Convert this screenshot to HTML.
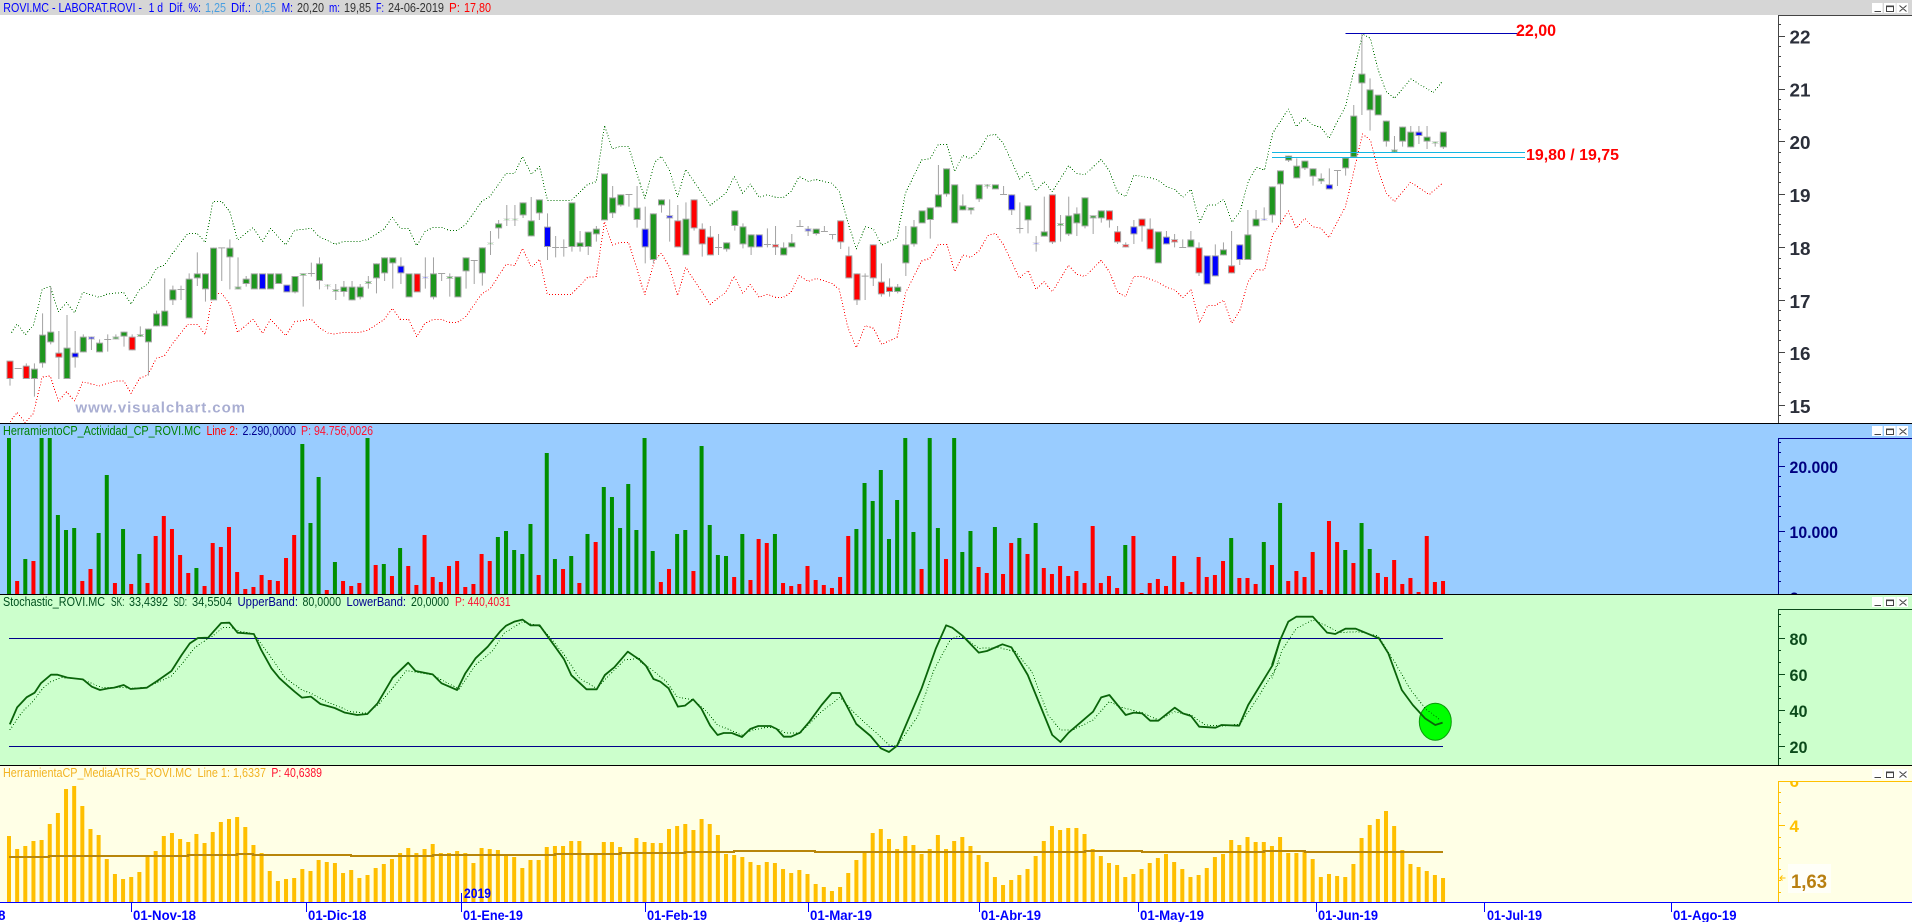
<!DOCTYPE html>
<html lang="es">
<head>
<meta charset="utf-8">
<title>ROVI.MC - LABORAT.ROVI</title>
<style>
html,body{margin:0;padding:0;background:#fff;width:1912px;height:922px;overflow:hidden}
svg{display:block}
text{font-family:"Liberation Sans",Arial,sans-serif;white-space:pre}
.t{font-size:12.6px}
.ax{font-size:17px;font-weight:bold}
.axm{font-size:18.5px;font-weight:bold}
.d{font-size:13.5px;font-weight:bold;fill:#0000ff}
.ns{vector-effect:non-scaling-stroke;fill:none}
.dot{stroke-dasharray:1 2;stroke-width:1;stroke-linejoin:round;shape-rendering:crispEdges}
</style>
</head>
<body>
<svg xmlns="http://www.w3.org/2000/svg" width="1912" height="922" viewBox="0 0 1912 922">
<defs>
<g id="btn">
<rect x="1872" y="3" width="10.6" height="10" fill="#fff"/>
<rect x="1884" y="3" width="11.7" height="10" fill="#fff"/>
<rect x="1896.5" y="3" width="11.5" height="10" fill="#fff"/>
<path d="M1874.5 11.5H1881M1886.5 6H1893.5V11.5H1886.5ZM1886.5 6.6H1893.5M1899.5 5.5L1906.5 11.5M1906.5 5.5L1899.5 11.5" stroke="#444" stroke-width="1" fill="none"/>
</g>
<g id="bd">
<path id="cg" d="M3 1109V1134M4 1007V1087M5 998V1024M7 1046V1134M9 1013V1054M11 1031V1054M13 1013V1015M14 998V1007M16 1006V1008M17 989V1024M18 943V976M19 935V976M20 871V898M22 839V952M23 823V832M24 823V865M25 746V898M27 746V769M28 863V865M29 839V849M30 823V865M32 823V865M33 823V849M35 831V874M36 823V825M38 793V840M39 856V857M40 871V873M41 863V873M42 863V898M43 863V889M44 847V849M45 793V832M46 775V817M47 775V787M49 823V889M52 823V889M54 831V833M55 832V889M56 775V811M58 745V817M59 730V731M60 673V682M61 658V659M62 658V659M63 610V643M64 664V706M65 601V637M69 610V738M70 730V738M71 698V738M72 689V700M73 523V658M74 595V637M75 586V613M77 626V657M79 643V777M80 601V613M83 659V763M88 730V745M89 634V675M90 682V730M91 706V739M95 745V763M96 730V739M99 689V699M109 863V873M110 736V787M111 682V730M112 634V667M113 625V657M114 586V619M115 508V580M116 556V667M117 619V628M118 625V628M119 556V595M120 555V556M121 556V565M125 619V658M127 697V707M129 673V675M130 649V700M131 643V667M132 595V676M133 649V652M134 634V652M141 697V787M145 721V739M149 751V763M152 706V777M153 659V676M155 562V643M156 514V550M157 470V479M158 500V532M159 485V502M160 508V527M161 538V541M164 476V502M165 350V469M166 224V247M167 271V328M168 287V343M169 365V422M170 452V454M171 383V422M172 398V439M174 413V422M175 428V429M176 398V439"/>
<path id="cr" d="M0 1085V1134M2 1100V1134M6 1061V1070M15 1013V1048M50 823V874M82 664V739M84 601V682M85 689V730M86 713V763M94 736V739M102 664V724M103 769V832M104 823V898M106 736V832M107 848V880M108 863V873M128 586V724M135 634V658M136 697V724M137 736V739M139 659V676M140 689V745M143 721V724M146 745V817M150 799V817"/>
<path id="cb" d="M8 1061V1070M10 1013V1015M31 823V865M34 857V874M48 800V817M51 832V833M66 683V738M78 689V739M81 649V652M92 706V739M98 689V691M123 586V628M126 730V731M138 682V700M142 713V730M147 769V850M148 769V826M151 736V777M154 658V659M162 556V565M173 398V405"/>
</g>
</defs>

<!-- MAIN PANEL -->
<rect x="0" y="0" width="1912" height="15" fill="#d6d6d6"/>
<rect x="0" y="15" width="1912" height="408" fill="#fff"/>

<g class="t">
<text x="3.3" y="12" fill="#0000ff" textLength="138.7" lengthAdjust="spacingAndGlyphs">ROVI.MC - LABORAT.ROVI -</text>
<text x="148.6" y="12" fill="#0000ff" textLength="14.4" lengthAdjust="spacingAndGlyphs">1 d</text>
<text x="169" y="12" fill="#0000ff" textLength="32" lengthAdjust="spacingAndGlyphs">Dif. %:</text>
<text x="205" y="12" fill="#4a9fe0" textLength="21" lengthAdjust="spacingAndGlyphs">1,25</text>
<text x="231" y="12" fill="#0000ff" textLength="20" lengthAdjust="spacingAndGlyphs">Dif.:</text>
<text x="255.5" y="12" fill="#4a9fe0" textLength="20.5" lengthAdjust="spacingAndGlyphs">0,25</text>
<text x="281.6" y="12" fill="#0000ff" textLength="11.4" lengthAdjust="spacingAndGlyphs">M:</text>
<text x="297" y="12" fill="#333" textLength="27" lengthAdjust="spacingAndGlyphs">20,20</text>
<text x="329" y="12" fill="#0000ff" textLength="11" lengthAdjust="spacingAndGlyphs">m:</text>
<text x="344" y="12" fill="#333" textLength="27" lengthAdjust="spacingAndGlyphs">19,85</text>
<text x="376" y="12" fill="#0000ff" textLength="8" lengthAdjust="spacingAndGlyphs">F:</text>
<text x="388" y="12" fill="#333" textLength="56" lengthAdjust="spacingAndGlyphs">24-06-2019</text>
<text x="449" y="12" fill="#ff0000" textLength="11" lengthAdjust="spacingAndGlyphs">P:</text>
<text x="464" y="12" fill="#ff0000" textLength="27" lengthAdjust="spacingAndGlyphs">17,80</text>
</g>
<use href="#btn"/>

<!-- Envelopes -->
<g transform="scale(.40816 .33333)" class="dotg">
<polyline class="ns dot" stroke="#007000" points="28,998 42,972 62,1004 82,975 92,930 103,868 123,859 143,935 163,908 183,938 203,877 243,892 263,882 303,877 321,913 342,868 362,853 383,805 403,795 423,760 460,700 483,700 503,727 522,604 543,604 563,635 582,720 620,683 643,725 663,685 700,735 722,691 763,685 782,710 822,733 842,724 882,724 902,718 940,688 961,652 981,685 1001,685 1021,737 1041,695 1062,682 1081,682 1101,691 1121,691 1141,673 1181,603 1200,590 1240,520 1261,520 1280,470 1302,523 1322,499 1341,601 1400,601 1440,553 1461,545 1481,376 1500,447 1520,439 1540,439 1568,550"/>
<polyline class="ns dot" stroke="#ff0000" points="25,1265 42,1237 62,1268 82,1240 103,1132 123,1128 143,1203 163,1176 183,1203 203,1145 243,1158 283,1143 303,1143 321,1180 342,1135 362,1125 383,1075 403,1067 423,1030 460,973 483,973 503,1003 522,880 543,880 563,912 582,997 620,958 643,1000 663,958 700,1007 722,965 763,958 782,983 805,1000 822,1002 842,997 882,997 902,990 940,960 961,925 981,958 1001,958 1021,1010 1041,970 1062,958 1081,958 1101,967 1121,967 1141,950 1181,880 1200,868 1240,793 1261,797 1280,745 1302,802 1322,778 1341,883 1400,883 1440,832 1461,830 1481,665 1500,735 1520,727 1540,727 1568,835"/>
</g>
<g transform="translate(640 0) scale(.40816 .33333)">
<polyline class="ns dot" stroke="#007000" points="0,550 12,595 36,487 52,469 72,510 92,590 112,508 172,616 210,580 231,530 252,580 270,552 292,592 312,584 332,592 352,592 370,575 390,530 412,544 432,539 470,550 488,573 510,670 530,747 552,680 572,687 592,735 630,714 650,580 690,480 710,477 731,433 752,433 771,515 791,466 810,476 830,454 852,407 871,403 891,432 930,537 951,515 970,573 990,545 1010,575 1050,497 1070,520 1090,524 1130,478 1150,513 1170,577 1190,590 1210,525 1250,533 1270,541 1290,560 1310,568 1330,592 1350,568 1371,667 1391,615 1410,615 1430,598 1450,667 1470,635 1490,545 1510,502 1530,510 1550,400 1568,366"/>
<polyline class="ns dot" stroke="#ff0000" points="0,840 12,884 36,780 52,760 72,800 92,887 112,802 172,913 210,877 231,828 252,880 270,853 292,892 312,883 332,892 352,892 370,877 390,826 412,844 432,835 470,850 488,868 510,985 530,1043 552,977 572,985 592,1033 630,1012 650,880 690,783 710,775 731,733 752,733 771,815 791,765 810,772 830,754 852,707 871,700 891,735 930,835 951,811 970,868 990,845 1010,875 1050,796 1070,823 1090,829 1130,781 1150,815 1170,877 1190,890 1210,829 1230,829 1270,847 1290,862 1310,870 1330,893 1350,868 1371,968 1391,916 1410,916 1430,900 1450,970 1470,930 1490,845 1510,808 1530,811 1550,705 1568,672"/>
</g>
<g transform="translate(1272 0) scale(.40816 .33333)">
<polyline class="ns dot" stroke="#007000" points="20,366 40,327 60,380 80,352 100,375 120,382 140,415 160,365 180,320 222,102 241,115 260,210 280,275 300,295 340,237 395,278 418,243"/>
<polyline class="ns dot" stroke="#ff0000" points="20,672 40,633 60,685 80,655 100,680 120,685 140,713 160,665 180,620 222,402 241,420 260,510 280,580 300,605 340,546 385,584 418,549"/>
</g>

<!-- Candles -->
<g transform="translate(10 0) scale(8.144 .33333)" shape-rendering="crispEdges" fill="none">
<path stroke="#a3a3a3" stroke-width=".123" d="M0 1082V1157M2 1090V1100M3 1090V1190M4 940V1103M5 860V1033M6 993V1137M7 945V1137M8 993V1103M9 1003V1057M10 1010V1050M11 1018V1057M12 1003V1055M13 1003V1018M14 995V1040M15 1003V1051M16 979V1010M17 986V1127M18 932V979M19 835V979M20 857V915M21 857V900M22 820V955M23 757V858M24 820V905M25 743V901M26 743V843M27 718V868M28 772V868M29 828V860M35 828V880M36 820V920M37 788V830M38 772V868M39 853V868M40 852V900M41 843V890M42 843V901M43 852V898M44 828V866M45 790V880M46 772V843M47 772V866M48 772V852M51 772V866M52 772V898M53 820V843M54 820V890M56 772V866M57 781V852M58 742V857M59 693V765M60 660V716M61 615V678M62 615V678M63 607V654M64 591V709M65 598V660M66 640V780M67 708V772M68 718V770M69 607V755M70 693V755M71 695V765M72 678V725M74 558V654M75 583V620M76 583V620M77 558V683M78 620V790M79 640V790M80 598V638M81 598V725M82 615V742M83 607V766M84 598V692M85 670V770M86 678V766M87 702V765M88 727V755M89 631V692M90 670V745M91 703V765M93 685V742M94 678V765M95 727V766M96 702V742M97 660V679M98 678V708M99 686V706M100 678V694M101 703V718M102 661V747M103 740V835M104 820V915M105 820V900M106 733V858M107 790V890M108 835V890M109 852V880M110 678V828M111 660V740M113 622V716M114 495V622M115 505V590M117 583V631M118 622V643M119 553V606M120 553V566M122 558V583M123 583V645M124 607V700M125 616V700M126 708V755M127 590V710M128 583V732M129 645V725M130 590V708M131 622V708M132 592V685M133 646V702M134 631V668M135 631V683M136 678V732M137 727V742M138 660V732M139 656V725M140 655V748M142 693V733M143 702V742M144 718V742M145 693V742M146 727V828M148 733V829M149 727V766M150 693V820M151 733V795M152 630V780M153 630V679M154 622V661M155 559V668M156 511V668M157 467V486M158 475V535M159 482V510M160 505V557M161 520V552M162 505V568M163 511V558M164 473V527M165 315V472M166 102V345M167 235V392M169 362V440M170 408V457M171 380V440M172 378V442M173 378V432M174 378V447M175 425V440M176 395V447"/>
<path stroke="#a3a3a3" stroke-width=".86" d="M1 1104V1107M12 1017V1020M21 867V870M26 742V745M37 819V822M53 819V822M57 780V783M67 741V744M68 741V744M76 582V585M87 741V744M93 732V735M97 678V681M100 693V696M101 702V705M105 827V830M122 582V585M124 684V687M144 741V744M163 510V513"/>
<use href="#bd" stroke="#a3a3a3" stroke-width=".86" transform="translate(0 -3)"/>
<use href="#bd" stroke="#a3a3a3" stroke-width=".86" transform="translate(0 3)"/>
<use href="#cg" stroke="#1e961e" stroke-width=".614"/>
<use href="#cr" stroke="#ff0000" stroke-width=".614"/>
<use href="#cb" stroke="#0000ff" stroke-width=".614"/>
</g>

<!-- Levels -->
<path d="M1345.5 33.5H1517" stroke="#0000b4" stroke-width="1" shape-rendering="crispEdges"/>
<path d="M1272 152.5H1525M1272 157.5H1525" stroke="#12b6e2" stroke-width="1" shape-rendering="crispEdges"/>
<text x="1516" y="36" font-size="16.5" font-weight="bold" fill="#ff0000" textLength="40" lengthAdjust="spacingAndGlyphs">22,00</text>
<text x="1526" y="160" font-size="16" font-weight="bold" fill="#ff0000" textLength="93" lengthAdjust="spacingAndGlyphs">19,80 / 19,75</text>
<text x="75.5" y="412.5" font-size="15" font-weight="bold" fill="#a9aed2" textLength="169.5" lengthAdjust="spacing">www.visualchart.com</text>

<!-- Main axis -->
<path d="M1778.5 15V423M1778 15.5H1912" stroke="#444" stroke-width="1" fill="none" shape-rendering="crispEdges"/>
<path stroke="#444" stroke-width="1" shape-rendering="crispEdges" d="M1778 36.5h7M1778 89.5h7M1778 141.5h7M1778 194.5h7M1778 247.5h7M1778 300.5h7M1778 352.5h7M1778 405.5h7M1778 24.5h3M1778 46.5h3M1778 56.5h3M1778 66.5h3M1778 76.5h3M1778 99.5h3M1778 109.5h3M1778 119.5h3M1778 129.5h3M1778 152.5h3M1778 162.5h3M1778 172.5h3M1778 182.5h3M1778 204.5h3M1778 214.5h3M1778 224.5h3M1778 234.5h3M1778 258.5h3M1778 268.5h3M1778 278.5h3M1778 288.5h3M1778 310.5h3M1778 320.5h3M1778 330.5h3M1778 340.5h3M1778 362.5h3M1778 372.5h3M1778 382.5h3M1778 392.5h3M1778 415.5h3"/>
<g class="axm" fill="#2b2f3a">
<text x="1789.5" y="43.5" textLength="21" lengthAdjust="spacingAndGlyphs">22</text>
<text x="1789.5" y="96.5" textLength="21" lengthAdjust="spacingAndGlyphs">21</text>
<text x="1789.5" y="149" textLength="21" lengthAdjust="spacingAndGlyphs">20</text>
<text x="1789.5" y="202" textLength="21" lengthAdjust="spacingAndGlyphs">19</text>
<text x="1789.5" y="255" textLength="21" lengthAdjust="spacingAndGlyphs">18</text>
<text x="1789.5" y="308" textLength="21" lengthAdjust="spacingAndGlyphs">17</text>
<text x="1789.5" y="360" textLength="21" lengthAdjust="spacingAndGlyphs">16</text>
<text x="1789.5" y="413" textLength="21" lengthAdjust="spacingAndGlyphs">15</text>
</g>

<!-- ACTIVIDAD PANEL -->
<rect x="0" y="423" width="1912" height="171" fill="#99ccff"/>
<g transform="translate(9 420) scale(8.148 .33333)" shape-rendering="crispEdges" fill="none" stroke-width=".491">
<path stroke="#008f00" d="M0 54V522M2 417V522M4 54V522M5 54V522M6 285V522M7 330V522M8 324V522M11 339V522M12 165V522M14 327V522M16 402V522M23 444V522M36 72V522M37 309V522M38 171V522M40 426V522M44 54V522M46 432V522M48 384V522M60 351V522M61 333V522M62 390V522M63 402V522M64 312V522M66 99V522M67 417V522M69 408V522M71 342V522M73 201V522M74 231V522M75 324V522M76 192V522M77 330V522M78 54V522M79 393V522M82 342V522M83 330V522M85 78V522M86 315V522M87 405V522M88 408V522M90 342V522M94 342V522M104 327V522M105 189V522M106 243V522M107 150V522M108 357V522M109 240V522M110 54V522M111 336V522M113 54V522M114 324V522M116 54V522M117 396V522M118 333V522M121 321V522M124 354V522M126 309V522M137 375V522M150 354V522M154 366V522M156 249V522M164 390V522M166 309V522M167 387V522"/>
<path stroke="#ff0000" d="M1 483V522M3 423V522M9 483V522M10 447V522M13 489V522M15 492V522M17 489V522M18 348V522M19 288V522M20 327V522M21 405V522M22 459V522M24 498V522M25 369V522M26 381V522M27 321V522M28 456V522M29 507V522M30 501V522M31 465V522M32 480V522M33 483V522M34 414V522M35 345V522M39 510V522M41 483V522M42 498V522M43 489V522M45 435V522M47 468V522M49 438V522M50 495V522M51 345V522M52 471V522M53 486V522M54 438V522M55 423V522M56 501V522M57 492V522M58 402V522M59 423V522M65 465V522M68 447V522M70 489V522M72 366V522M80 486V522M81 447V522M84 453V522M89 471V522M91 480V522M92 357V522M93 369V522M95 489V522M96 498V522M97 492V522M98 438V522M99 480V522M100 495V522M101 504V522M102 471V522M103 348V522M112 447V522M115 417V522M119 441V522M120 459V522M122 462V522M123 369V522M125 402V522M127 444V522M128 462V522M129 438V522M130 468V522M131 453V522M132 489V522M133 318V522M134 489V522M135 468V522M136 504V522M138 348V522M139 519V522M140 489V522M141 477V522M142 498V522M143 408V522M144 486V522M145 516V522M146 411V522M147 471V522M148 465V522M149 423V522M151 474V522M152 474V522M153 492V522M155 435V522M157 483V522M158 453V522M159 471V522M160 396V522M161 510V522M162 303V522M163 366V522M165 429V522M168 459V522M169 471V522M170 420V522M171 492V522M172 474V522M173 516V522M174 348V522M175 486V522M176 483V522"/>
</g>
<g class="t">
<text x="3" y="435" fill="#008000" textLength="198" lengthAdjust="spacingAndGlyphs">HerramientoCP_Actividad_CP_ROVI.MC</text>
<text x="206.5" y="435" fill="#ff0000" textLength="31.5" lengthAdjust="spacingAndGlyphs">Line 2:</text>
<text x="242.5" y="435" fill="#000090" textLength="53.5" lengthAdjust="spacingAndGlyphs">2.290,0000</text>
<text x="301" y="435" fill="#ff1030" textLength="72" lengthAdjust="spacingAndGlyphs">P: 94.756,0026</text>
</g>
<use href="#btn" y="423"/>
<path d="M1778.5 438V594M1778 438.5H1912" stroke="#000090" stroke-width="1" fill="none" shape-rendering="crispEdges"/>
<path stroke="#000090" stroke-width="1" shape-rendering="crispEdges" d="M1778 466.5h7M1778 531.5h7M1778 442.5h3M1778 452.5h3M1778 476.5h3M1778 486.5h3M1778 496.5h3M1778 506.5h3M1778 516.5h3M1778 541.5h3M1778 551.5h3M1778 561.5h3M1778 571.5h3M1778 581.5h3"/>
<g class="ax" fill="#000080">
<text x="1789.5" y="473" textLength="48.5" lengthAdjust="spacingAndGlyphs">20.000</text>
<text x="1789.5" y="538" textLength="48.5" lengthAdjust="spacingAndGlyphs">10.000</text>
<text x="1789.5" y="604">0</text>
</g>

<!-- STOCHASTIC PANEL -->
<rect x="0" y="594" width="1912" height="171" fill="#ccffcc"/>
<path d="M9 638.5H1443M9 746.5H1443" stroke="#00008b" stroke-width="1" shape-rendering="crispEdges"/>
<ellipse cx="1435.3" cy="721.7" rx="16" ry="18.5" fill="#00ff00" stroke="#0a9a0a" stroke-width="1"/>
<g transform="translate(0 590) scale(.40816 .33333)">
<polyline class="ns dot" stroke="#006400" points="24,420 55,365 80,335 105,295 125,275 150,263 200,268 225,280 250,293 300,292 320,295 360,292 395,272 420,258 450,215 478,172 505,150 525,135 545,113 565,112 585,123 622,132 660,195 700,265 740,300 762,310 800,335 860,365 900,370 930,340 965,290 995,242 1060,255 1085,272 1125,297 1165,225 1205,185 1235,130 1280,95 1325,110 1380,190 1420,265 1462,295 1485,265 1530,210 1568,205"/>
<polyline class="ns" stroke="#0a640a" stroke-width="1.8" stroke-linejoin="round" points="24,403 42,352 65,322 85,308 100,280 125,254 140,254 165,263 203,268 225,290 245,300 265,295 280,293 303,285 320,297 360,293 385,273 420,243 445,195 465,160 485,144 510,143 525,122 542,99 562,98 582,128 622,132 640,180 665,235 685,265 705,287 722,305 740,323 762,320 785,342 820,354 845,368 875,375 900,372 925,340 962,263 1000,218 1018,243 1060,253 1082,280 1120,300 1140,250 1165,205 1195,170 1225,125 1240,107 1260,95 1280,89 1300,106 1322,106 1360,170 1382,208 1400,256 1437,298 1462,298 1482,255 1505,232 1538,185 1568,210"/>
</g>
<g transform="translate(640 590) scale(.40816 .33333)">
<polyline class="ns dot" stroke="#006400" points="0,215 30,240 65,275 90,320 130,330 160,360 190,405 225,422 250,435 275,420 310,412 335,415 355,428 392,430 440,370 490,322 530,375 580,430 610,465 630,468 680,380 720,240 760,150 780,138 800,148 830,175 880,173 920,185 960,245 1000,375 1030,420 1060,420 1110,390 1150,335 1180,352 1230,368 1270,390 1310,365 1350,375 1385,405 1430,408 1470,402 1510,330 1568,215"/>
<polyline class="ns" stroke="#0a640a" stroke-width="1.8" stroke-linejoin="round" points="0,210 15,228 33,267 50,275 70,295 93,350 110,347 130,328 150,355 172,407 190,435 205,429 225,429 250,441 270,417 290,408 320,408 335,417 352,440 370,440 392,428 415,395 445,345 470,309 490,309 530,402 565,438 590,475 610,486 630,467 690,295 725,175 750,106 765,113 790,137 830,188 850,183 888,163 910,172 950,255 1010,435 1030,456 1050,428 1110,365 1130,322 1150,315 1190,375 1210,368 1230,370 1250,392 1270,392 1310,353 1330,370 1350,378 1370,410 1410,413 1425,405 1468,407 1490,345 1550,225 1568,150"/>
</g>
<g transform="translate(1272 590) scale(.40816 .33333)">
<polyline class="ns dot" stroke="#006400" points="0,265 25,180 60,115 100,90 130,105 165,128 210,125 260,138 300,215 340,300 375,355 410,388"/>
<polyline class="ns" stroke="#0a640a" stroke-width="1.8" stroke-linejoin="round" points="0,225 20,150 40,95 60,80 100,80 135,128 155,132 180,116 205,116 262,145 285,190 318,300 345,345 375,385 400,405 418,398"/>
</g>
<g class="t">
<text x="3" y="606" fill="#00501e" textLength="102" lengthAdjust="spacingAndGlyphs">Stochastic_ROVI.MC</text>
<text x="111" y="606" fill="#00501e" textLength="13.5" lengthAdjust="spacingAndGlyphs">SK:</text>
<text x="129" y="606" fill="#00501e" textLength="39" lengthAdjust="spacingAndGlyphs">33,4392</text>
<text x="173.5" y="606" fill="#00501e" textLength="13.5" lengthAdjust="spacingAndGlyphs">SD:</text>
<text x="192" y="606" fill="#00501e" textLength="40" lengthAdjust="spacingAndGlyphs">34,5504</text>
<text x="237.5" y="606" fill="#000090" textLength="60.5" lengthAdjust="spacingAndGlyphs">UpperBand:</text>
<text x="302.5" y="606" fill="#00501e" textLength="38.5" lengthAdjust="spacingAndGlyphs">80,0000</text>
<text x="346.5" y="606" fill="#000090" textLength="59.5" lengthAdjust="spacingAndGlyphs">LowerBand:</text>
<text x="411" y="606" fill="#00501e" textLength="38" lengthAdjust="spacingAndGlyphs">20,0000</text>
<text x="455" y="606" fill="#ff1030" textLength="55.6" lengthAdjust="spacingAndGlyphs">P: 440,4031</text>
</g>
<use href="#btn" y="594"/>
<path d="M1778.5 609V765M1778 609.5H1912" stroke="#0a4a1a" stroke-width="1" fill="none" shape-rendering="crispEdges"/>
<path stroke="#0a4a1a" stroke-width="1" shape-rendering="crispEdges" d="M1778 638.5h7M1778 674.5h7M1778 710.5h7M1778 746.5h7M1778 614.5h3M1778 626.5h3M1778 650.5h3M1778 662.5h3M1778 686.5h3M1778 698.5h3M1778 722.5h3M1778 734.5h3M1778 758.5h3"/>
<g class="ax" fill="#0a4a1a">
<text x="1789.5" y="645" textLength="18" lengthAdjust="spacingAndGlyphs">80</text>
<text x="1789.5" y="681" textLength="18" lengthAdjust="spacingAndGlyphs">60</text>
<text x="1789.5" y="717" textLength="18" lengthAdjust="spacingAndGlyphs">40</text>
<text x="1789.5" y="753" textLength="18" lengthAdjust="spacingAndGlyphs">20</text>
</g>

<!-- ATR PANEL -->
<rect x="0" y="765" width="1912" height="137" fill="#ffffe6"/>
<g class="ax" fill="#ffc000"><text x="1789.5" y="787" font-size="17">6</text></g>
<rect x="1778" y="766" width="134" height="15" fill="#ffffe6"/>
<g transform="translate(9 760) scale(8.148 .33333)" shape-rendering="crispEdges" fill="none" stroke="#ffbf00" stroke-width=".491">
<path d="M0 228V427M1 267V427M2 258V427M3 243V427M4 240V427M5 192V427M6 159V427M7 87V427M8 78V427M9 138V427M10 207V427M11 225V427M12 297V427M13 342V427M14 357V427M15 351V427M16 336V427M17 288V427M18 273V427M19 228V427M20 219V427M21 237V427M22 246V427M23 222V427M24 249V427M25 216V427M26 186V427M27 177V427M28 171V427M29 201V427M30 255V427M31 279V427M32 333V427M33 363V427M34 357V427M35 354V427M36 327V427M37 333V427M38 300V427M39 306V427M40 309V427M41 339V427M42 330V427M43 354V427M44 345V427M45 324V427M46 312V427M47 297V427M48 279V427M49 264V427M50 279V427M51 267V427M52 252V427M53 279V427M54 279V427M55 273V427M56 279V427M57 309V427M58 264V427M59 267V427M60 270V427M61 288V427M62 291V427M63 324V427M64 300V427M65 300V427M66 261V427M67 258V427M68 258V427M69 243V427M70 243V427M71 282V427M72 282V427M73 246V427M74 246V427M75 261V427M76 282V427M77 234V427M78 246V427M79 249V427M80 249V427M81 207V427M82 198V427M83 192V427M84 210V427M85 177V427M86 192V427M87 225V427M88 282V427M89 285V427M90 291V427M91 306V427M92 315V427M93 306V427M94 309V427M95 327V427M96 339V427M97 330V427M98 342V427M99 372V427M100 381V427M101 393V427M102 381V427M103 339V427M104 300V427M105 279V427M106 219V427M107 207V427M108 237V427M109 267V427M110 228V427M111 255V427M112 282V427M113 267V427M114 225V427M115 267V427M116 243V427M117 231V427M118 258V427M119 285V427M120 306V427M121 351V427M122 375V427M123 360V427M124 345V427M125 327V427M126 288V427M127 243V427M128 198V427M129 210V427M130 204V427M131 204V427M132 222V427M133 267V427M134 288V427M135 309V427M136 315V427M137 351V427M138 342V427M139 327V427M140 309V427M141 294V427M142 282V427M143 306V427M144 327V427M145 351V427M146 345V427M147 324V427M148 291V427M149 282V427M150 240V427M151 255V427M152 231V427M153 246V427M154 246V427M155 258V427M156 231V427M157 279V427M158 279V427M159 276V427M160 297V427M161 351V427M162 342V427M163 348V427M164 351V427M165 312V427M166 234V427M167 195V427M168 177V427M169 153V427M170 198V427M171 270V427M172 312V427M173 321V427M174 333V427M175 345V427M176 354V427"/>
</g>
<g fill="none" stroke="#b8860b" stroke-width="2" shape-rendering="crispEdges">
<path d="M9 857H49V856H188V855H237V854H253V855H351V856H433V855H555V854H620V853H685V852H734V851H815V852H1085V851H1142V852H1264V851H1305V852H1443"/>
</g>
<g class="t">
<text x="3" y="777" fill="#f2b424" textLength="189" lengthAdjust="spacingAndGlyphs">HerramientaCP_MediaATR5_ROVI.MC</text>
<text x="197.5" y="777" fill="#f2b424" textLength="68.5" lengthAdjust="spacingAndGlyphs">Line 1: 1,6337</text>
<text x="271.4" y="777" fill="#ff1030" textLength="50.6" lengthAdjust="spacingAndGlyphs">P: 40,6389</text>
</g>
<use href="#btn" y="766"/>
<path d="M1778.5 781V902M1778 781.5H1912" stroke="#ffc000" stroke-width="1" fill="none" shape-rendering="crispEdges"/>
<path stroke="#ffc000" stroke-width="1" shape-rendering="crispEdges" d="M1778 825.5h7M1778 792.5h3M1778 802.5h3M1778 813.5h3M1778 837.5h3M1778 847.5h3M1778 858.5h3M1778 869.5h3M1778 880.5h3M1778 892.5h3"/>
<text x="1789.5" y="832" class="ax" fill="#ffc000">4</text>
<rect x="1788" y="864" width="43" height="29" fill="#fffff8"/>
<text x="1791" y="888" font-size="19" font-weight="bold" fill="#b87f10" textLength="36" lengthAdjust="spacingAndGlyphs">1,63</text>
<path d="M1785.5 878H1780M1782.5 875.5L1780 878L1782.5 880.5" stroke="#ffc000" stroke-width="1" fill="none"/>

<!-- Separators -->
<path d="M0 423.5H1912M0 594.5H1912M0 765.5H1912" stroke="#000" stroke-width="1" shape-rendering="crispEdges"/>

<!-- Date axis -->
<rect x="0" y="902" width="1912" height="20" fill="#fff"/>
<path d="M0 902.5H1912" stroke="#0000ff" stroke-width="1" shape-rendering="crispEdges"/>
<path d="M131.5 902V912M306.5 902V912M461.5 893V912M645.5 902V912M808.5 902V912M979.5 902V912M1138.5 902V912M1316.5 902V912M1484.5 902V912M1671.5 902V912" stroke="#0000ff" stroke-width="1" shape-rendering="crispEdges"/>
<text class="d" x="464" y="898" textLength="27" lengthAdjust="spacingAndGlyphs" fill="#0000ff">2019</text>
<text class="d" x="-2" y="920">8</text>
<text class="d" x="133" y="920" textLength="63" lengthAdjust="spacingAndGlyphs">01-Nov-18</text>
<text class="d" x="308" y="920" textLength="58.5" lengthAdjust="spacingAndGlyphs">01-Dic-18</text>
<text class="d" x="463" y="920" textLength="60" lengthAdjust="spacingAndGlyphs">01-Ene-19</text>
<text class="d" x="647" y="920" textLength="60" lengthAdjust="spacingAndGlyphs">01-Feb-19</text>
<text class="d" x="810" y="920" textLength="62" lengthAdjust="spacingAndGlyphs">01-Mar-19</text>
<text class="d" x="981" y="920" textLength="60" lengthAdjust="spacingAndGlyphs">01-Abr-19</text>
<text class="d" x="1140" y="920" textLength="64" lengthAdjust="spacingAndGlyphs">01-May-19</text>
<text class="d" x="1318" y="920" textLength="60" lengthAdjust="spacingAndGlyphs">01-Jun-19</text>
<text class="d" x="1487" y="920" textLength="55" lengthAdjust="spacingAndGlyphs">01-Jul-19</text>
<text class="d" x="1673" y="920" textLength="63.5" lengthAdjust="spacingAndGlyphs">01-Ago-19</text>
</svg>
</body>
</html>
